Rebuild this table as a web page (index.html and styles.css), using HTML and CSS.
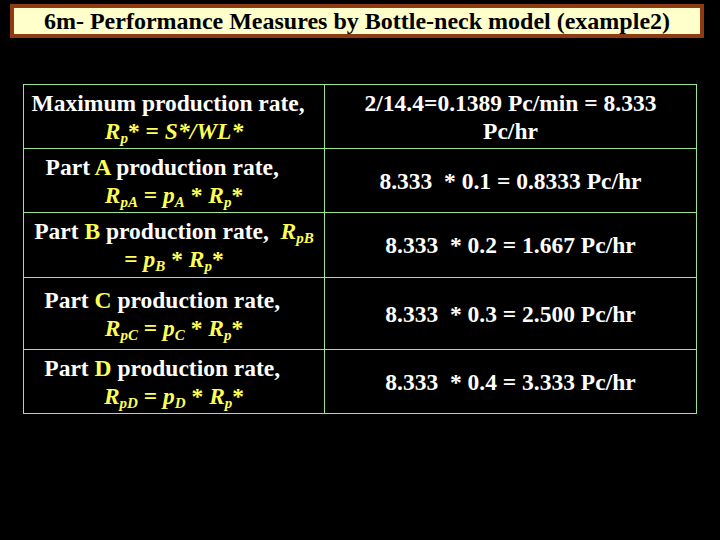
FILE: index.html
```html
<!DOCTYPE html>
<html>
<head>
<meta charset="utf-8">
<link rel="stylesheet" href="styles.css">
</head>
<body>
<div class="slide">
  <div class="title">6m- Performance Measures by Bottle-neck model (example2)</div>
  <table class="grid">
    <tr class="r1">
      <td class="left">Maximum production rate,&nbsp;&nbsp;<br><span class="y"><i>R<sub>p</sub></i>* = <i>S*/WL*</i></span></td>
      <td class="right">2/14.4=0.1389 Pc/min = 8.333<br>Pc/hr</td>
    </tr>
    <tr class="r2">
      <td class="left">Part <span class="y">A</span> production rate,&nbsp;&nbsp;&nbsp;&nbsp;<br><span class="y"><i>R<sub>pA</sub></i> = <i>p<sub>A</sub></i> * <i>R<sub>p</sub></i>*</span></td>
      <td class="right">8.333&nbsp; * 0.1 = 0.8333 Pc/hr</td>
    </tr>
    <tr class="r3">
      <td class="left">Part <span class="y">B</span> production rate,&nbsp; <span class="y"><i>R<sub>pB</sub></i></span><br><span class="y">= <i>p<sub>B</sub></i> * <i>R<sub>p</sub></i>*</span></td>
      <td class="right">8.333&nbsp; * 0.2 = 1.667 Pc/hr</td>
    </tr>
    <tr class="r4">
      <td class="left">Part <span class="y">C</span> production rate,&nbsp;&nbsp;&nbsp;&nbsp;<br><span class="y"><i>R<sub>pC</sub></i> = <i>p<sub>C</sub></i> * <i>R<sub>p</sub></i>*</span></td>
      <td class="right">8.333&nbsp; * 0.3 = 2.500 Pc/hr</td>
    </tr>
    <tr class="r5">
      <td class="left">Part <span class="y">D</span> production rate,&nbsp;&nbsp;&nbsp;&nbsp;<br><span class="y"><i>R<sub>pD</sub></i> = <i>p<sub>D</sub></i> * <i>R<sub>p</sub></i>*</span></td>
      <td class="right">8.333&nbsp; * 0.4 = 3.333 Pc/hr</td>
    </tr>
  </table>
</div>
</body>
</html>
```
FILE: styles.css
```css
html, body {
  margin: 0;
  padding: 0;
  background: #000;
}
.slide {
  width: 720px;
  height: 540px;
  background: #000;
  padding-top: 4px;
  box-sizing: border-box;
  font-family: "Liberation Serif", "Times New Roman", serif;
  font-weight: bold;
}
.title {
  margin-left: 10px;
  width: 694px;
  height: 34px;
  box-sizing: border-box;
  border: 4px solid #8e3a12;
  background: #ffffcc;
  color: #000;
  font-size: 24px;
  font-weight: bold;
  line-height: 26px;
  text-align: center;
}
.grid {
  margin-top: 46px;
  margin-left: 23px;
  width: 674px;
  border-collapse: collapse;
  color: #fff;
  font-size: 23.5px;
}
.grid td {
  border: 1px solid #99e68f;
  text-align: center;
  vertical-align: middle;
  padding: 0;
  line-height: 28px;
  white-space: nowrap;
}
.grid td.left { width: 300px; }
.r1 td { height: 63px; }
.r2 td { height: 63px; }
.r3 td { height: 64px; }
.r4 td { height: 71px; }
.r5 td { height: 63px; }
.y { color: #ffff55; }
sub {
  font-size: 15px;
  vertical-align: -4px;
  line-height: 0;
}
```
